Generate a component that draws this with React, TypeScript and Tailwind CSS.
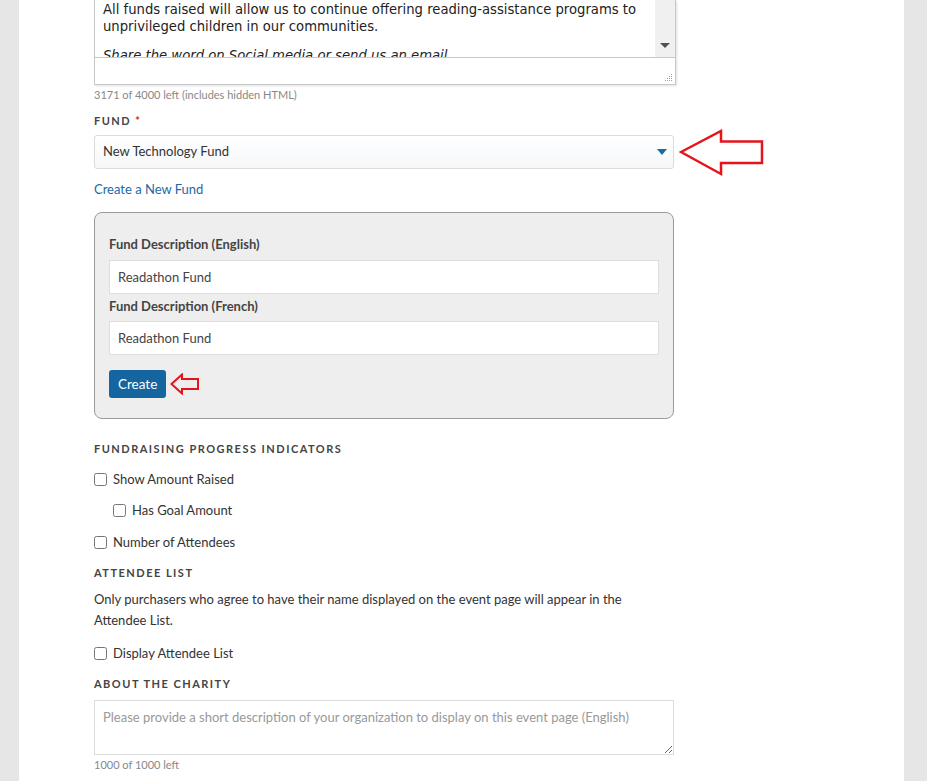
import React from "react";

const BigArrow = () => (
  <svg width="86" height="48" viewBox="0 0 86 48" className="absolute left-[calc(100%+5px)] top-[-6px]">
    <path
      d="M2 23 L42 2 L42 12.5 L83 12.5 L83 34 L42 34 L42 45 Z"
      fill="none"
      stroke="#e5141b"
      strokeWidth="2.5"
      strokeLinejoin="miter"
    />
  </svg>
);

const SmallArrow = () => (
  <svg width="30" height="22" viewBox="0 0 30 22" className="ml-[4px]">
    <path d="M1.5 11 L12 1.5 L12 6 L28 6 L28 16 L12 16 L12 20.5 Z" fill="none" stroke="#e5141b" strokeWidth="2" />
  </svg>
);

const Heading = ({ children, className = "" }: { children: React.ReactNode; className?: string }) => (
  <div className={`h-4 text-[11px] leading-4 font-bold tracking-[0.135em] text-[#444] uppercase ${className}`}>{children}</div>
);

const Check = ({ label, className = "" }: { label: string; className?: string }) => (
  <label className={`flex items-center h-5 text-[13px] leading-5 text-[#333] ${className}`}>
    <input type="checkbox" className="m-0 w-[13px] h-[13px] mr-[6px]" />
    <span>{label}</span>
  </label>
);

export default function App() {
  return (
    <div className="min-h-[781px] bg-[#e6e6e6] px-[19px] pr-[23px] font-['Lato','Open_Sans',sans-serif]">
      <div className="bg-white min-h-[781px] pl-[75px] pb-6">
        <div className="w-[580px]">
          {/* rich text editor */}
          <div className="border border-t-0 border-[#c8c8c8] shadow-[1px_1px_2px_rgba(0,0,0,0.12)] w-[582px]">
            <div className="flex h-[57px]">
              <div className="flex-1 overflow-hidden pl-[8px] pt-px pr-2 font-['DejaVu_Sans',sans-serif] text-[13.2px] leading-[17px] text-[#222]">
                <p className="mb-[12px]">
                  All funds raised will allow us to continue offering reading-assistance programs to unprivileged children in our communities.
                </p>
                <p className="italic">Share the word on Social media or send us an email.</p>
              </div>
              <div className="w-[20px] bg-[#f0f0f0] flex items-end justify-center pb-[9px]">
                <div className="w-0 h-0 border-l-[5px] border-r-[5px] border-t-[5px] border-l-transparent border-r-transparent border-t-[#505050]" />
              </div>
            </div>
            <div className="h-[27px] border-t border-[#c8c8c8] flex items-end justify-end p-[2px]">
              <svg width="8" height="8" viewBox="0 0 8 8">
                <g fill="#8ca0c8">
                  <rect x="6" y="0" width="1" height="1" />
                  <rect x="4" y="2" width="1" height="1" />
                  <rect x="6" y="2" width="1" height="1" />
                  <rect x="2" y="4" width="1" height="1" />
                  <rect x="4" y="4" width="1" height="1" />
                  <rect x="6" y="4" width="1" height="1" />
                  <rect x="0" y="6" width="1" height="1" />
                  <rect x="2" y="6" width="1" height="1" />
                  <rect x="4" y="6" width="1" height="1" />
                  <rect x="6" y="6" width="1" height="1" />
                </g>
              </svg>
            </div>
          </div>
          <div className="mt-[2px] h-4 text-[11px] leading-4 text-[#888]">3171 of 4000 left (includes hidden HTML)</div>

          <Heading className="mt-[10px]">
            Fund <span className="text-[#d9262c]">*</span>
          </Heading>

          <div className="relative mt-[6px]">
            <div className="h-[34px] border border-[#dcdcdc] rounded-[3px] bg-gradient-to-b from-white to-[#f5f7f9] flex items-center justify-between pl-[8px] pr-[6px] text-[13px] text-[#333]">
              <span>New Technology Fund</span>
              <div className="w-0 h-0 border-l-[5px] border-r-[5px] border-t-[6px] border-l-transparent border-r-transparent border-t-[#1a6aa5]" />
            </div>
            <BigArrow />
          </div>

          <div className="mt-[10px] h-5 leading-5 text-[13px] text-[#1b6ba6]">Create a New Fund</div>

          <div className="mt-[13px] h-[207px] bg-[#eeeeee] border border-[#9a9a9a] rounded-[8px] px-[14px] pt-[21px]">
            <div className="h-5 leading-5 text-[13px] font-bold text-[#444]">Fund Description (English)</div>
            <input
              defaultValue="Readathon Fund"
              className="mt-[6px] block w-full h-[34px] bg-white border border-[#dedede] px-[8px] text-[13px] text-[#444] outline-none"
            />
            <div className="mt-[2px] h-5 leading-5 text-[13px] font-bold text-[#444]">Fund Description (French)</div>
            <input
              defaultValue="Readathon Fund"
              className="mt-[5px] block w-full h-[34px] bg-white border border-[#dedede] px-[8px] text-[13px] text-[#444] outline-none"
            />
            <div className="mt-[15px] flex items-center">
              <button className="h-[28px] px-[9px] bg-[#1565a0] text-white text-[13.5px] rounded-[3px]">Create</button>
              <SmallArrow />
            </div>
          </div>

          <Heading className="mt-[22px]">Fundraising Progress Indicators</Heading>
          <Check label="Show Amount Raised" className="mt-[12px]" />
          <Check label="Has Goal Amount" className="mt-[11px] ml-[19px]" />
          <Check label="Number of Attendees" className="mt-[12px]" />

          <Heading className="mt-[13px]">Attendee List</Heading>
          <p className="mt-[8px] text-[13px] leading-[21px] text-[#333] pr-[40px]">
            Only purchasers who agree to have their name displayed on the event page will appear in the Attendee List.
          </p>
          <Check label="Display Attendee List" className="mt-[12px]" />

          <Heading className="mt-[13px]">About the Charity</Heading>
          <textarea
            placeholder="Please provide a short description of your organization to display on this event page (English)"
            className="mt-[8px] block w-full h-[55px] border border-[#dcdcdc] px-[8px] py-[6px] text-[13px] leading-5 text-[#333] placeholder:text-[#999] resize-y outline-none"
          />
          <div className="mt-[2px] h-4 text-[11px] leading-4 text-[#888]">1000 of 1000 left</div>
        </div>
      </div>
    </div>
  );
}
